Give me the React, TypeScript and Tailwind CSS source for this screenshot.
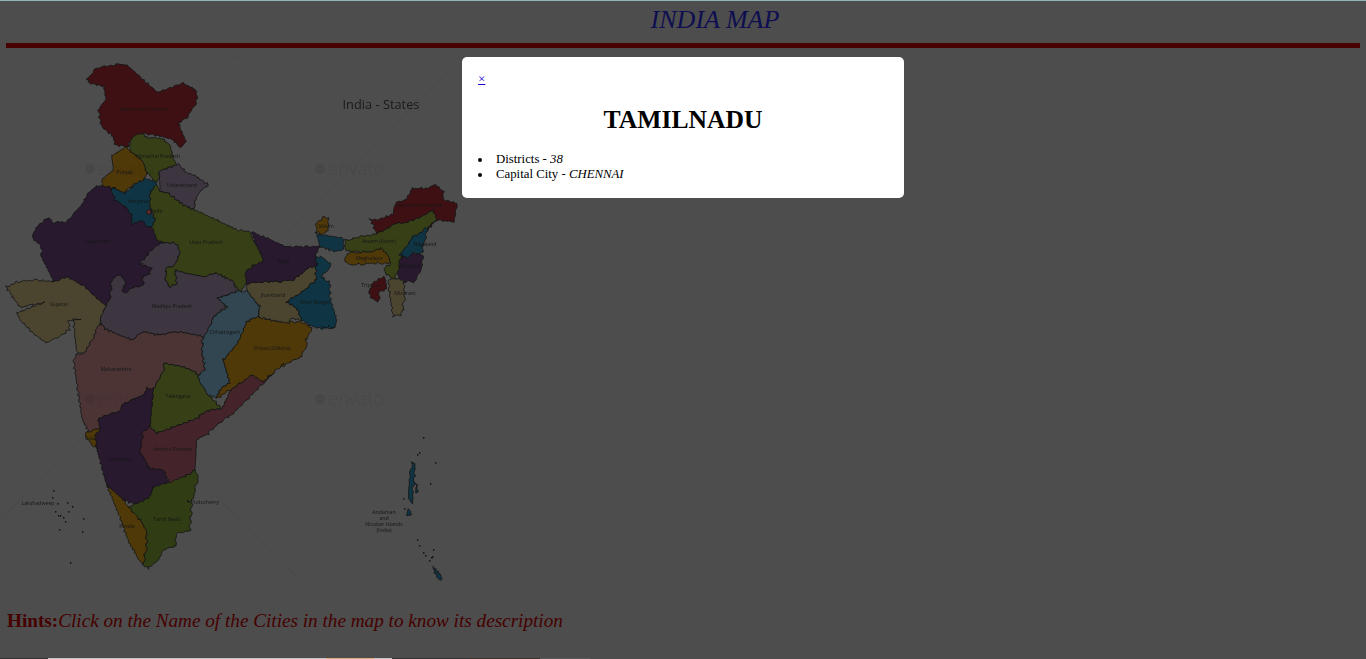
import React from "react";

type Frame = [number, number, number];

// reference crops were traced at 3x, each frame maps back to page pixels
const A: Frame = [0, 50, 1 / 3];
const B: Frame = [230, 50, 1 / 3];
const C: Frame = [0, 320, 1 / 3];
const P: Frame = [0, 0, 1];

const RED = "#3e1014";
const GREEN = "#363f16";
const MAUVE = "#3d3540";
const ORANGE = "#503909";
const BLUE = "#0f3544";
const PURPLE = "#28192f";
const TAN = "#4b4530";
const ROSE = "#4c3435";
const WINE = "#44242a";
const SLATE = "#314650";
const TN = "#303c13";

const states: { fill: string; frame: Frame; pts: string }[] = [
  { fill: RED, frame: A, pts: "262,85 290,55 315,50 350,42 380,45 400,62 430,90 470,125 510,115 550,100 590,122 590,160 560,205 535,220 545,245 560,275 540,292 520,270 480,258 425,250 395,270 380,290 345,285 340,260 305,230 295,178 318,150 312,110 270,100" },
  { fill: GREEN, frame: A, pts: "400,258 425,250 445,265 480,262 510,285 518,320 530,350 505,355 478,365 475,392 465,395 440,365 430,335 392,305 388,290" },
  { fill: ORANGE, frame: A, pts: "380,292 392,305 430,335 440,365 435,385 410,400 385,415 370,430 345,415 305,408 310,385 340,360 335,315 355,305" },
  { fill: MAUVE, frame: A, pts: "478,365 505,355 535,340 555,365 590,380 625,405 600,425 590,445 580,478 555,468 530,450 505,430 480,425" },
  { fill: BLUE, frame: A, pts: "375,430 410,400 435,385 465,395 470,405 450,425 450,470 455,490 465,510 465,530 440,530 425,510 395,525 395,495 375,470 345,450 332,420 345,415" },
  { fill: PURPLE, frame: A, pts: "290,408 305,408 345,415 332,420 345,450 375,470 395,495 395,525 425,510 440,530 457,530 470,570 495,578 465,590 420,640 455,655 450,670 430,680 430,705 395,715 370,730 365,720 378,700 360,672 335,690 330,745 318,768 290,745 255,710 200,680 160,695 125,620 125,590 95,560 110,530 145,503 160,518 200,515 240,470 265,430" },
  { fill: GREEN, frame: A, pts: "470,405 480,425 505,430 530,450 555,468 580,478 640,505 690,530 715,540 750,545 790,630 735,665 740,695 720,730 700,695 650,670 610,680 560,670 525,660 530,700 510,712 495,690 500,650 520,650 540,610 530,580 495,578 470,570 457,530 465,510 450,470 450,425" },
  { fill: MAUVE, frame: A, pts: "420,640 465,590 495,578 530,580 540,610 520,650 500,650 495,690 510,712 530,700 525,660 560,670 610,680 650,670 700,695 710,725 680,735 655,745 680,770 640,800 625,840 610,860 540,845 470,855 430,845 395,870 320,840 300,820 305,790 318,768 330,745 335,690 360,672 378,700 365,720 370,730 395,715 430,705 430,680 450,670 455,655" },
  { fill: TAN, frame: A, pts: "20,710 50,695 110,690 160,695 200,680 255,710 290,745 318,768 305,800 295,825 285,860 250,910 230,905 225,860 220,810 240,805 205,815 210,840 140,880 100,850 60,810 50,790 80,775 135,755 100,765 60,770 40,745 30,725 20,720" },
  { fill: ROSE, frame: C, pts: "225,105 250,100 285,50 285,30 300,10 320,30 395,60 430,35 470,45 540,35 610,50 605,90 615,150 595,165 575,150 545,140 495,130 490,150 460,205 440,205 430,225 400,240 365,255 360,275 295,295 300,325 265,335 245,290 235,220 222,130" },
  { fill: GREEN, frame: C, pts: "495,130 545,140 575,150 595,165 600,185 625,225 665,265 620,275 580,300 515,325 470,340 450,320 455,260 460,205 490,150" },
  { fill: PURPLE, frame: C, pts: "295,295 360,275 365,255 400,240 430,225 440,205 460,205 455,260 450,320 430,335 420,395 450,445 490,450 505,490 460,500 450,530 405,555 365,535 320,495 290,385 285,345 300,325" },
  { fill: ORANGE, frame: C, pts: "265,335 300,325 285,345 290,385 275,375 255,345" },
  { fill: WINE, frame: C, pts: "430,335 450,320 470,340 515,325 580,300 620,275 665,265 690,210 720,190 755,165 790,185 820,160 750,230 700,280 650,315 620,345 590,360 585,450 555,470 510,490 490,450 450,445 420,395" },
  { fill: ORANGE, frame: C, pts: "320,495 365,535 385,560 405,580 420,600 440,630 440,680 430,735 410,710 385,660 360,590" },
  { fill: TN, frame: C, pts: "405,555 450,530 460,500 505,490 555,470 585,450 595,470 575,550 570,630 530,640 525,680 490,690 475,720 445,745 430,735 440,680 440,630 420,600 385,560" },
  { fill: SLATE, frame: P, pts: "227,295 237,292 247,291 260,307 258,317 247,322 237,343 230,353 223,360 230,382 222,388 217,398 208,395 200,382 198,375 205,370 202,350 203,337 208,330 213,317 227,307 218,298" },
  { fill: ORANGE, frame: P, pts: "258,317 280,322 302,322 312,328 305,340 307,343 302,357 280,367 273,373 263,382 252,375 240,383 230,390 217,398 222,388 230,382 223,360 230,353 237,343 247,322" },
  { fill: TAN, frame: B, pts: "50,700 100,695 135,695 190,690 240,650 258,650 258,690 225,720 170,755 200,775 215,810 180,805 175,820 150,815 85,800 90,770 50,722" },
  { fill: PURPLE, frame: B, pts: "65,545 100,560 135,575 165,590 210,590 270,590 255,620 262,645 240,650 190,690 135,695 100,695 50,700 45,665 100,630 75,575" },
  { fill: BLUE, frame: B, pts: "258,650 262,645 255,620 275,620 305,645 275,680 300,700 300,740 320,810 310,835 260,835 240,825 215,810 200,775 170,755 225,720 258,690" },
  { fill: BLUE, frame: B, pts: "258,550 280,555 340,565 340,600 315,605 270,590" },
  { fill: ORANGE, frame: B, pts: "260,520 280,500 295,505 295,540 275,555 258,545" },
  { fill: GREEN, frame: B, pts: "345,570 395,560 440,550 500,520 540,515 610,480 620,505 590,540 545,565 515,610 505,660 495,690 465,670 465,655 480,640 480,625 455,595 420,605 360,605 345,600" },
  { fill: ORANGE, frame: B, pts: "350,610 420,605 455,595 480,625 480,640 420,640 365,645 345,635" },
  { fill: RED, frame: B, pts: "420,510 460,505 490,490 495,460 525,450 545,415 590,415 615,402 640,425 640,450 680,460 680,480 670,515 615,510 590,548 590,540 620,505 610,480 540,515 500,520 440,550 430,525" },
  { fill: BLUE, frame: B, pts: "590,535 590,548 575,610 550,610 530,625 510,615 545,565" },
  { fill: PURPLE, frame: B, pts: "515,615 530,625 550,610 578,615 575,650 555,695 505,695 505,660" },
  { fill: TAN, frame: B, pts: "475,690 495,685 520,690 525,735 515,795 490,800 480,740" },
  { fill: RED, frame: B, pts: "445,690 465,680 470,715 450,725 445,755 425,745 417,725 425,700" },
  // Andaman and Nicobar
  { fill: BLUE, frame: P, pts: "412.7,460.7 415,465 414.3,480 412.7,488 412.7,505 408.3,496.7 410,473" },
  { fill: BLUE, frame: P, pts: "416,483 418,485 417,493 416,492" },
  { fill: BLUE, frame: P, pts: "409.3,509.3 411.7,515 406.7,515" },
  { fill: BLUE, frame: P, pts: "433,567 438,572 442,578 439,581 435,573" },
];

const labels: [string, number, number][] = [
  ["Jammu and Kashmir", 144, 111],
  ["Himachal Pradesh", 158, 158],
  ["Punjab", 125, 174],
  ["Uttarakhand", 182, 187],
  ["Haryana", 138, 203],
  ["Delhi", 156, 213],
  ["Rajasthan", 98, 243],
  ["Uttar Pradesh", 206, 244],
  ["Gujarat", 59, 306],
  ["Madhya Pradesh", 172, 308],
  ["Chhattisgarh", 225, 334],
  ["Bihar", 284, 263],
  ["Jharkhand", 273, 297],
  ["West Bengal", 315, 304],
  ["Orissa (Odisha)", 272, 350],
  ["Sikkim", 326, 228],
  ["Arunachal Pradesh", 420, 207],
  ["Assam (Asom)", 379, 243],
  ["Nagaland", 425, 246],
  ["Meghalaya", 369, 260],
  ["Manipur", 410, 268],
  ["Tripura", 370, 287],
  ["Mizoram", 405, 295],
  ["Maharashtra", 116, 371],
  ["Telangana", 178, 398],
  ["Goa", 90, 440],
  ["Andhra Pradesh", 173, 451],
  ["Karnataka", 120, 461],
  ["Lakshadweep", 38, 505],
  ["Puducherry", 205, 504],
  ["Tamil Nadu", 167, 521],
  ["Kerala", 127, 528],
  ["Andaman", 384, 514],
  ["and", 384, 520],
  ["Nicobar Islands", 384, 526],
  ["(India)", 384, 532],
];

const specks = [
  [53, 490], [52, 497], [57, 503], [67, 502], [72, 506], [68, 511], [63, 517], [60, 515], [65, 521], [58, 515],
  [55, 511], [83, 518], [59, 529], [82, 531], [70, 562],
  [423, 437], [419, 452], [417, 454], [435, 462], [430, 483], [403, 498], [404, 508], [417, 539], [419, 545],
  [423, 552], [425, 555], [433, 549], [431, 557], [429, 560], [432, 556],
  [187, 500], [188, 501], [322, 326], [325, 327], [328, 325], [331, 327], [334, 326], [281, 364], [283, 363],
];

const envato = [[315, 169], [315, 399], [85, 169], [85, 399]];

// borders are wiggled by position, so two states sharing an edge stay together
function wiggle(x: number, y: number): [number, number] {
  const dx = Math.sin(x * 1.7 + y * 0.9) * 0.7 + Math.sin(x * 0.6 - y * 2.3) * 0.6;
  const dy = Math.sin(x * 2.1 - y * 0.8) * 0.7 + Math.sin(x * 0.7 + y * 1.9) * 0.6;
  return [x + dx, y + dy];
}

function toPath(frame: Frame, pts: string) {
  const page = pts.split(" ").map((p) => {
    const [x, y] = p.split(",").map(Number);
    return [frame[0] + x * frame[2], frame[1] + y * frame[2]];
  });
  const out: string[] = [];
  page.forEach((p, i) => {
    const q = page[(i + 1) % page.length];
    const steps = Math.max(1, Math.round(Math.hypot(q[0] - p[0], q[1] - p[1]) / 2));
    for (let s = 0; s < steps; s++) {
      const [wx, wy] = wiggle(p[0] + ((q[0] - p[0]) * s) / steps, p[1] + ((q[1] - p[1]) * s) / steps);
      out.push(`${wx.toFixed(1)},${wy.toFixed(1)}`);
    }
  });
  return out.join(" ");
}

function IndiaMap() {
  return (
    <svg width="460" height="540" viewBox="0 54 460 540" className="block">
      <defs>
        <filter id="soft" colorInterpolationFilters="sRGB">
          <feGaussianBlur stdDeviation="0.35" />
        </filter>
      </defs>
      {/* watermark grid */}
      <g stroke="#000000" strokeOpacity="0.05" strokeWidth="0.8" strokeDasharray="40 10" fill="none">
        <path d="M0 290L236 54M0 520L460 60M170 580L460 290M400 580L460 520M234 54L460 280M4 54L460 510M0 280L300 580M0 510L70 580" />
      </g>
      <g filter="url(#soft)" stroke="#141414" strokeWidth="0.8" strokeLinejoin="round">
        {states.map((s, i) => (
          <polygon key={i} fill={s.fill} points={toPath(s.frame, s.pts)} />
        ))}
        <circle cx="149" cy="212" r="2.5" fill="#5e2a2d" />
      </g>
      <g filter="url(#soft)" fill="#000000" fillOpacity="0.07">
        {envato.map(([x, y]) => (
          <g key={`${x}-${y}`}>
            <circle cx={x + 5} cy={y} r="5" />
            <text x={x + 13} y={y + 6} fontSize="18.5" fontFamily="'Open Sans', sans-serif" fontWeight="300">envato</text>
          </g>
        ))}
      </g>
      <g fill="#111111" filter="url(#soft)">
        {specks.map(([x, y]) => (
          <rect key={`${x}-${y}`} x={x} y={y} width="1.4" height="1.6" />
        ))}
      </g>
      <g fill="#161616" fontSize="5.2" textAnchor="middle" fontFamily="'Open Sans', sans-serif" filter="url(#soft)">
        {labels.map(([t, x, y]) => (
          <text key={t} x={x} y={y}>{t}</text>
        ))}
      </g>
      <text x="381" y="109" fill="#1a1a1a" fontSize="12.8" textAnchor="middle" fontFamily="'Open Sans', sans-serif" filter="url(#soft)">
        India - States
      </text>
    </svg>
  );
}

export default function App() {
  return (
    <div className="relative h-[659px] overflow-hidden bg-[#4d4d4d] font-['Liberation_Serif',serif] border-t border-[#8fb5b5]">
      <div className="px-[6px]">
        <h2 className="h-[42px] pl-[64px] pt-[4px] text-center text-[26px] leading-[30px] font-normal italic text-[#0e0e50]">INDIA MAP</h2>
        <div className="h-[5px] bg-[#480000]" />
        <div className="mt-[6px] -ml-[6px]">
          <IndiaMap />
        </div>
        <p className="mt-[16px] pl-px text-[19.2px] leading-[22px] italic text-[#460000]">
          <b className="not-italic">Hints:</b>Click on the Name of the Cities in the map to know its description
        </p>
      </div>
      <div className="absolute bottom-0 left-0 flex h-px w-[590px] bg-[#333333]">
        <div className="ml-[48px] flex w-[344px] bg-[#c4c4c4]">
          <div className="ml-[278px] w-[48px] bg-[#dcae7e]" />
        </div>
        <div className="ml-[78px] w-[70px] bg-[#3d322a]" />
        <div className="w-[50px] bg-[#5a5a5a]" />
      </div>
      <div className="absolute left-[462px] top-[56px] h-[141px] w-[442px] rounded-[5px] bg-white px-4 pt-[14px] text-black">
        <a href="#" className="block w-[7px] text-[13px] leading-[15px] text-[#2200cc] underline">×</a>
        <h1 className="mt-[18px] text-center text-[25.6px] leading-[31px] font-bold">TAMILNADU</h1>
        <ul className="mt-[17px] text-[12.8px] leading-[15px]">
          <li className="flex items-center">
            <span className="mr-[14px] h-[4px] w-[4px] rounded-full bg-black" />
            <span>Districts - <i>38</i></span>
          </li>
          <li className="flex items-center">
            <span className="mr-[14px] h-[4px] w-[4px] rounded-full bg-black" />
            <span>Capital City - <i>CHENNAI</i></span>
          </li>
        </ul>
      </div>
    </div>
  );
}
